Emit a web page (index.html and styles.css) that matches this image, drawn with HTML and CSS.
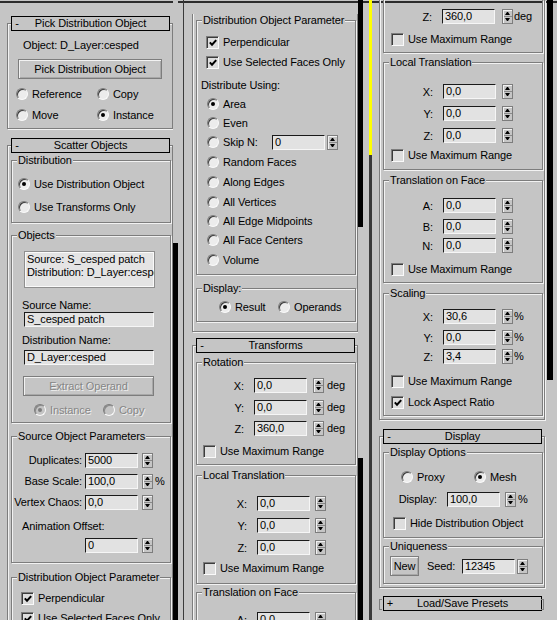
FILE: index.html
```html
<!DOCTYPE html>
<html lang="en">
<head>
<meta charset="utf-8">
<title>Scatter</title>
<link rel="stylesheet" href="styles.css">
</head>
<body>
<div class="screen">

 <div class="col c1">
  <div class="panel">
   <div class="rollout r-pick">
    <div class="rhead"><span>-</span><span>Pick Distribution Object</span><span></span></div>
    <div class="objline">Object: D_Layer:cesped</div>
    <div class="btn btn-pick">Pick Distribution Object</div>
    <div class="pair pr-pick mt7"><span class="opt"><i class="radio"></i>Reference</span><span class="opt"><i class="radio"></i>Copy</span></div>
    <div class="pair pr-pick mt5"><span class="opt"><i class="radio"></i>Move</span><span class="opt"><i class="radio on"></i>Instance</span></div>
   </div>
   <div class="rollout r-scatter">
    <div class="rhead"><span>-</span><span>Scatter Objects</span><span></span></div>
    <fieldset class="grp g-dist">
     <legend>Distribution</legend>
     <div class="opt mt9 ind6"><i class="radio on"></i>Use Distribution Object</div>
     <div class="opt mt7 ind6"><i class="radio"></i>Use Transforms Only</div>
    </fieldset>
    <fieldset class="grp g-objs">
     <legend>Objects</legend>
     <div class="list"><div>Source: S_cesped patch</div><div>Distribution: D_Layer:cesped</div></div>
     <div class="flabel mt11">Source Name:</div>
     <div class="fld name">S_cesped patch</div>
     <div class="flabel mt7">Distribution Name:</div>
     <div class="fld name mt3">D_Layer:cesped</div>
     <div class="btn btn-extract disabled">Extract Operand</div>
     <div class="pair pr-ext mt6 disabled"><span class="opt"><i class="radio on"></i>Instance</span><span class="opt"><i class="radio"></i>Copy</span></div>
    </fieldset>
    <fieldset class="grp g-src p-src">
     <legend>Source Object Parameters</legend>
     <div class="srow mt9"><span class="lbl">Duplicates:</span><span class="fld">5000</span><i class="spin"></i></div>
     <div class="srow mt5"><span class="lbl">Base Scale:</span><span class="fld">100,0</span><i class="spin"></i><span class="unit">%</span></div>
     <div class="srow mt5"><span class="lbl">Vertex Chaos:</span><span class="fld">0,0</span><i class="spin"></i></div>
     <div class="flabel mt10">Animation Offset:</div>
     <div class="srow mt4"><span class="lbl"></span><span class="fld">0</span><i class="spin"></i></div>
    </fieldset>
    <fieldset class="grp g-dop1">
     <legend>Distribution Object Parameter</legend>
     <div class="opt mt6 ind9"><i class="chk"><svg width="8" height="8" viewBox="0 0 8 8"><path d="M0.8 3.4l2.2 2.3 4.2-4.6" fill="none" stroke="#000" stroke-width="2"/></svg></i>Perpendicular</div>
     <div class="opt mt4 ind9"><i class="chk"><svg width="8" height="8" viewBox="0 0 8 8"><path d="M0.8 3.4l2.2 2.3 4.2-4.6" fill="none" stroke="#000" stroke-width="2"/></svg></i>Use Selected Faces Only</div>
    </fieldset>
   </div>
  </div>
  <div class="sbar"></div>
  <div class="rest"></div>
 </div>

 <div class="col c2">
  <div class="panel">
   <div class="rollout cont r-scat2">
    <fieldset class="grp g-dop2">
     <legend>Distribution Object Parameter</legend>
     <div class="opt mt7 ind9"><i class="chk"><svg width="8" height="8" viewBox="0 0 8 8"><path d="M0.8 3.4l2.2 2.3 4.2-4.6" fill="none" stroke="#000" stroke-width="2"/></svg></i>Perpendicular</div>
     <div class="opt mt4 ind9"><i class="chk"><svg width="8" height="8" viewBox="0 0 8 8"><path d="M0.8 3.4l2.2 2.3 4.2-4.6" fill="none" stroke="#000" stroke-width="2"/></svg></i>Use Selected Faces Only</div>
     <div class="flabel2 mt9">Distribute Using:</div>
     <div class="opt mt4 ind10"><i class="radio on"></i>Area</div>
     <div class="opt mt3 ind10"><i class="radio"></i>Even</div>
     <div class="opt mt3 ind10"><i class="radio"></i><span class="skiplbl">Skip N:</span><span class="fld">0</span><i class="spin skipspin"></i></div>
     <div class="opt mt4 ind10"><i class="radio"></i>Random Faces</div>
     <div class="opt mt4 ind10"><i class="radio"></i>Along Edges</div>
     <div class="opt mt4 ind10"><i class="radio"></i>All Vertices</div>
     <div class="opt mt3 ind10"><i class="radio"></i>All Edge Midpoints</div>
     <div class="opt mt3 ind10"><i class="radio"></i>All Face Centers</div>
     <div class="opt mt4 ind10"><i class="radio"></i>Volume</div>
    </fieldset>
    <fieldset class="grp g-disp2">
     <legend>Display:</legend>
     <div class="pair pr-disp mt4"><span class="opt"><i class="radio on"></i>Result</span><span class="opt"><i class="radio"></i>Operands</span></div>
    </fieldset>
   </div>
   <div class="rollout r-trans">
    <div class="rhead"><span>-</span><span>Transforms</span><span></span></div>
    <fieldset class="grp t-rot2 g-rot2">
     <legend>Rotation</legend>
     <div class="srow mt8"><span class="lbl lo">X:</span><span class="fld">0,0</span><i class="spin"></i><span class="unit">deg</span></div>
     <div class="srow mt6"><span class="lbl lo">Y:</span><span class="fld">0,0</span><i class="spin"></i><span class="unit">deg</span></div>
     <div class="srow mt5"><span class="lbl lo">Z:</span><span class="fld">360,0</span><i class="spin"></i><span class="unit">deg</span></div>
     <div class="opt mt7 ind6"><i class="chk"></i>Use Maximum Range</div>
    </fieldset>
    <fieldset class="grp t-lt2 g-lt2">
     <legend>Local Translation</legend>
     <div class="srow mt13"><span class="lbl lo">X:</span><span class="fld">0,0</span><i class="spin"></i></div>
     <div class="srow mt6"><span class="lbl lo">Y:</span><span class="fld">0,0</span><i class="spin"></i></div>
     <div class="srow mt6"><span class="lbl lo">Z:</span><span class="fld">0,0</span><i class="spin"></i></div>
     <div class="opt mt5 ind6"><i class="chk"></i>Use Maximum Range</div>
    </fieldset>
    <fieldset class="grp t-lt2 g-tof2">
     <legend>Translation on Face</legend>
     <div class="srow mt12"><span class="lbl lo">A:</span><span class="fld">0,0</span><i class="spin"></i></div>
    </fieldset>
   </div>
  </div>
  <div class="sbar"></div>
  <div class="rest"></div>
 </div>

 <div class="strip"></div>

 <div class="col c3">
  <div class="panel">
   <div class="rollout cont r-trans3">
    <fieldset class="grp cont t-rot3">
     <div class="srow mt8"><span class="lbl lo">Z:</span><span class="fld">360,0</span><i class="spin"></i><span class="unit">deg</span></div>
     <div class="opt mt7 ind7"><i class="chk"></i>Use Maximum Range</div>
    </fieldset>
    <fieldset class="grp t-lt3 g-lt3">
     <legend>Local Translation</legend>
     <div class="srow mt14"><span class="lbl lo">X:</span><span class="fld">0,0</span><i class="spin"></i></div>
     <div class="srow mt6"><span class="lbl lo">Y:</span><span class="fld">0,0</span><i class="spin"></i></div>
     <div class="srow mt6"><span class="lbl lo">Z:</span><span class="fld">0,0</span><i class="spin"></i></div>
     <div class="opt mt4 ind7"><i class="chk"></i>Use Maximum Range</div>
    </fieldset>
    <fieldset class="grp t-lt3 g-tof3">
     <legend>Translation on Face</legend>
     <div class="srow mt10"><span class="lbl lo">A:</span><span class="fld">0,0</span><i class="spin"></i></div>
     <div class="srow mt5"><span class="lbl lo">B:</span><span class="fld">0,0</span><i class="spin"></i></div>
     <div class="srow mt3"><span class="lbl lo">N:</span><span class="fld">0,0</span><i class="spin"></i></div>
     <div class="opt mt8 ind7"><i class="chk"></i>Use Maximum Range</div>
    </fieldset>
    <fieldset class="grp t-lt3 g-scl3">
     <legend>Scaling</legend>
     <div class="srow mt8"><span class="lbl lo">X:</span><span class="fld">30,6</span><i class="spin"></i><span class="unit">%</span></div>
     <div class="srow mt5"><span class="lbl lo">Y:</span><span class="fld">0,0</span><i class="spin"></i><span class="unit">%</span></div>
     <div class="srow mt3"><span class="lbl lo">Z:</span><span class="fld">3,4</span><i class="spin"></i><span class="unit">%</span></div>
     <div class="opt mt9 ind7"><i class="chk"></i>Use Maximum Range</div>
     <div class="opt mt5 ind7"><i class="chk"><svg width="8" height="8" viewBox="0 0 8 8"><path d="M0.8 3.4l2.2 2.3 4.2-4.6" fill="none" stroke="#000" stroke-width="2"/></svg></i>Lock Aspect Ratio</div>
    </fieldset>
   </div>
   <div class="rollout r-disp3">
    <div class="rhead"><span>-</span><span>Display</span><span></span></div>
    <fieldset class="grp g-dopt">
     <legend>Display Options</legend>
     <div class="pair pr-dopt mt10"><span class="opt"><i class="radio"></i>Proxy</span><span class="opt"><i class="radio on"></i>Mesh</span></div>
     <div class="srow d-row mt6"><span class="lbl">Display:</span><span class="fld">100,0</span><i class="spin"></i><span class="unit">%</span></div>
     <div class="opt mt8 ind9"><i class="chk"></i>Hide Distribution Object</div>
    </fieldset>
    <fieldset class="grp g-uniq">
     <legend>Uniqueness</legend>
     <div class="urow mt3"><span class="btn btn-new">New</span><span class="seedlbl">Seed:</span><span class="fld">12345</span><i class="spin"></i></div>
    </fieldset>
   </div>
   <div class="closed"><div class="rhead closedhead"><span>+</span><span>Load/Save Presets</span><span></span></div></div>
  </div>
  <div class="sbar"></div>
  <div class="rest"></div>
 </div>

</div>
</body>
</html>
```
FILE: styles.css
```css
* { box-sizing: border-box; }
html, body { margin: 0; }
body {
  width: 557px; height: 620px; overflow: hidden;
  background: #c5c5c5;
  font-family: "Liberation Sans", Arial, sans-serif;
  font-size: 11px; line-height: 13px; color: #000;
  letter-spacing: -0.1px;
}
i { font-style: normal; }

.screen { display: flex; height: 620px; }
.col {
  display: flex; flex: none; height: 620px; overflow: hidden;
  background: linear-gradient(#c5c5c5 0 1px, #2c2c2c 1px 3px, #c5c5c5 3px);
}
.c1 { width: 185px; }
.c2 { width: 184px; }
.c3 { width: 185px; }
.strip { width: 3px; flex: none; background: linear-gradient(#ffff00 0 155px, #3a3a3a 155px); }

.panel { width: 173px; flex: none; padding-left: 7px; }
.sbar { width: 5px; flex: none; }
.c1 .sbar { background: linear-gradient(#c5c5c5 0 243px, #000 243px); }
.c2 .sbar { background: linear-gradient(#000 0 227px, #c5c5c5 227px 458px, #000 458px); }
.c3 .sbar { width: 6px; margin-left: 2px; background: linear-gradient(#000 0 380px, #c5c5c5 380px); }
.rest { flex: 1; }
.c1 .rest { background: linear-gradient(to right, transparent 5px, #3a3a3a 5px 6px, transparent 6px); }

/* rollouts */
.rollout {
  border: 1px solid #7d7d7d;
  box-shadow: inset 1px 1px 0 #f2f2f2, 1px 1px 0 #f2f2f2;
}
.rollout.cont { border-top: 0; box-shadow: inset 1px 0 0 #f2f2f2, 1px 1px 0 #f2f2f2; }
.rhead {
  display: grid; grid-template-columns: 10px 1fr 10px;
  height: 15px; margin: -8px 2px 0 3px;
  border: 1px solid #000; background: #c5c5c5;
  line-height: 13px; text-align: center; white-space: nowrap;
}
.r-pick { margin-top: 23px; padding-bottom: 5px; }
.r-scatter { margin-top: 16px; }
.r-scat2 { padding-bottom: 9px; }
.r-trans { margin-top: 13px; }
.r-trans3 { padding-bottom: 3px; }
.r-disp3 { margin-top: 16px; padding-bottom: 3px; }

.closed { position: relative; margin-top: 8px; padding-left: 4px; }
.closedhead { margin: 0 3px 0 0; grid-template-columns: 12px 1fr 12px; }
.closed::before, .closed::after {
  content: ""; position: absolute; top: 3px; height: 9px; width: 2px;
  border: 1px solid #7d7d7d;
}
.closed::before { left: 0; border-right: 0; }
.closed::after { right: 1px; border-left: 0; }

/* group boxes */
.grp {
  margin: 0 1px 0 3px; padding: 0; min-width: 0;
  border: 1px solid #7d7d7d;
  box-shadow: inset 1px 1px 0 #f2f2f2, 1px 1px 0 #f2f2f2;
}
.grp legend { margin-left: 5px; padding: 0 1px; line-height: 13px; background: #c5c5c5; }
.grp.cont { border-top: 0; box-shadow: inset 1px 0 0 #f2f2f2, 1px 1px 0 #f2f2f2; }

.g-dist { margin-top: 1px; padding-bottom: 7px; }
.g-objs { margin-top: 6px; padding-bottom: 4px; }
.g-src { margin-top: 7px; padding-bottom: 9px; }
.g-dop1 { margin-top: 8px; }
.g-dop2 { margin-top: 14px; padding-bottom: 6px; }
.g-disp2 { margin-top: 7px; padding-bottom: 6px; }
.g-rot2 { margin-top: 3px; padding-bottom: 5px; }
.g-lt2 { margin-top: 4px; padding-bottom: 7px; }
.g-tof2 { margin-top: 2px; }
.t-rot3 { padding-bottom: 5px; }
.g-lt3 { margin-top: 3px; padding-bottom: 6px; }
.g-tof3 { margin-top: 4px; padding-bottom: 5px; }
.g-scl3 { margin-top: 4px; padding-bottom: 5px; }
.g-dopt { margin-top: 2px; padding-bottom: 6px; }
.g-uniq { margin-top: 2px; padding-bottom: 7px; }

/* spacing helpers */
.mt3 { margin-top: 3px; } .mt4 { margin-top: 4px; } .mt5 { margin-top: 5px; }
.mt6 { margin-top: 6px; } .mt7 { margin-top: 7px; } .mt8 { margin-top: 8px; }
.mt9 { margin-top: 9px; } .mt10 { margin-top: 10px; } .mt11 { margin-top: 11px; }
.mt12 { margin-top: 12px; } .mt13 { margin-top: 13px; } .mt14 { margin-top: 14px; }
.ind6 { padding-left: 6px; } .ind7 { padding-left: 7px; }
.ind9 { padding-left: 9px; } .ind10 { padding-left: 10px; }

/* text rows */
.objline { margin-top: 8px; padding-left: 15px; }
.flabel { padding-left: 10px; }
.flabel2 { padding-left: 4px; }
.opt { display: flex; align-items: center; gap: 4px; height: 16px; white-space: nowrap; }
.pair { display: flex; height: 16px; }
.pr-pick { padding-left: 8px; }
.pr-pick .opt:first-child { width: 81px; }
.pr-ext { padding-left: 22px; }
.pr-ext .opt:first-child { width: 69px; }
.pr-disp { padding-left: 22px; }
.pr-disp .opt:first-child { width: 59px; }
.pr-dopt { padding-left: 17px; }
.pr-dopt .opt:first-child { width: 73px; }
.skiplbl { width: 45px; }
.skipspin { margin-left: -2px; }

.disabled { color: #858585; text-shadow: 1px 1px 0 #efefef; }

/* controls */
.radio {
  position: relative; flex: none; width: 12px; height: 12px; border-radius: 50%;
  background: #ececec; border: 1px solid;
  border-color: #7d7d7d #fafafa #fafafa #7d7d7d;
  box-shadow: inset 1px 1px 0 #3c3c3c;
}
.radio.on::after {
  content: ""; position: absolute; left: 3px; top: 3px;
  width: 4px; height: 4px; border-radius: 50%; background: #000;
}
.disabled .radio { background: #c5c5c5; box-shadow: inset 1px 1px 0 #8a8a8a; }
.disabled .radio.on::after { background: #7d7d7d; }

.chk {
  position: relative; flex: none; width: 13px; height: 13px;
  background: #dedede; border: 1px solid;
  border-color: #7d7d7d #fafafa #fafafa #7d7d7d;
  box-shadow: inset 1px 1px 0 #3c3c3c;
}
.chk svg { position: absolute; left: 2px; top: 2px; display: block; }

.fld {
  display: block; flex: none; width: 53px; height: 15px; padding-left: 2px;
  background: #e2e2e2; border: 1px solid;
  border-color: #1a1a1a #f6f6f6 #f6f6f6 #1a1a1a;
  line-height: 13px; white-space: nowrap; overflow: hidden;
}
.fld.name { margin-left: 12px; width: 130px; }

.spin {
  position: relative; flex: none; width: 11px; height: 15px;
  border: 1px solid #7d7d7d;
  background: linear-gradient(#c5c5c5 0 6px, #8a8a8a 6px 7px, #c5c5c5 7px);
  box-shadow: inset 1px 1px 0 #f2f2f2;
}
.spin::before, .spin::after {
  content: ""; position: absolute; left: 2px; box-sizing: content-box;
  width: 1px; height: 0;
  border-left: 2px solid transparent; border-right: 2px solid transparent;
}
.spin::before { top: 2px; border-bottom: 3px solid #000; }
.spin::after { bottom: 2px; border-top: 3px solid #000; }

.btn {
  display: block; height: 20px; background: #c5c5c5;
  border: 1px solid #7d7d7d;
  box-shadow: inset 1px 1px 0 #f2f2f2, inset -1px -1px 0 #a8a8a8;
  text-align: center; line-height: 18px; white-space: nowrap;
}
.btn-pick { margin: 7px 0 0 10px; width: 144px; }
.btn-extract { margin: 11px 0 0 11px; width: 131px; }
.btn-new { width: 29px; flex: none; }

.list {
  margin: 9px 0 0 12px; width: 131px; height: 37px; padding: 1px 0 0 2px;
  background: #e4e4e4; border: 1px solid #8f8f8f;
  box-shadow: inset 1px 1px 0 #fafafa, inset -1px -1px 0 #fafafa;
  white-space: nowrap; overflow: hidden;
}

/* spinner rows */
.srow { display: flex; align-items: center; height: 16px; white-space: nowrap; }
.srow .lbl { flex: none; text-align: right; padding-right: 10px; }
.srow .lbl.lo { padding-top: 3px; }
.unit { margin-left: 2px; }

.p-src .lbl { width: 73px; padding-right: 3px; }
.p-src .spin { margin-left: 4px; }

.t-rot2 .lbl { width: 57px; }
.t-rot2 .spin { margin-left: 6px; }
.t-rot2 .unit { margin-left: 3px; }
.t-lt2 .lbl { width: 60px; }
.t-lt2 .spin { margin-left: 5px; }

.t-rot3 .lbl { width: 58px; }
.t-rot3 .spin { margin-left: 7px; }
.t-rot3 .unit { margin-left: 1px; }
.t-lt3 .lbl { width: 59px; }
.t-lt3 .spin { margin-left: 6px; }
.t-lt3 .unit { margin-left: 1px; }

.d-row .lbl { width: 63px; }
.d-row .spin { margin-left: 5px; }

.urow { display: flex; align-items: center; height: 20px; padding-left: 6px; }
.seedlbl { width: 35px; margin-left: 8px; flex: none; }
.urow .spin { margin-left: 2px; }
```
